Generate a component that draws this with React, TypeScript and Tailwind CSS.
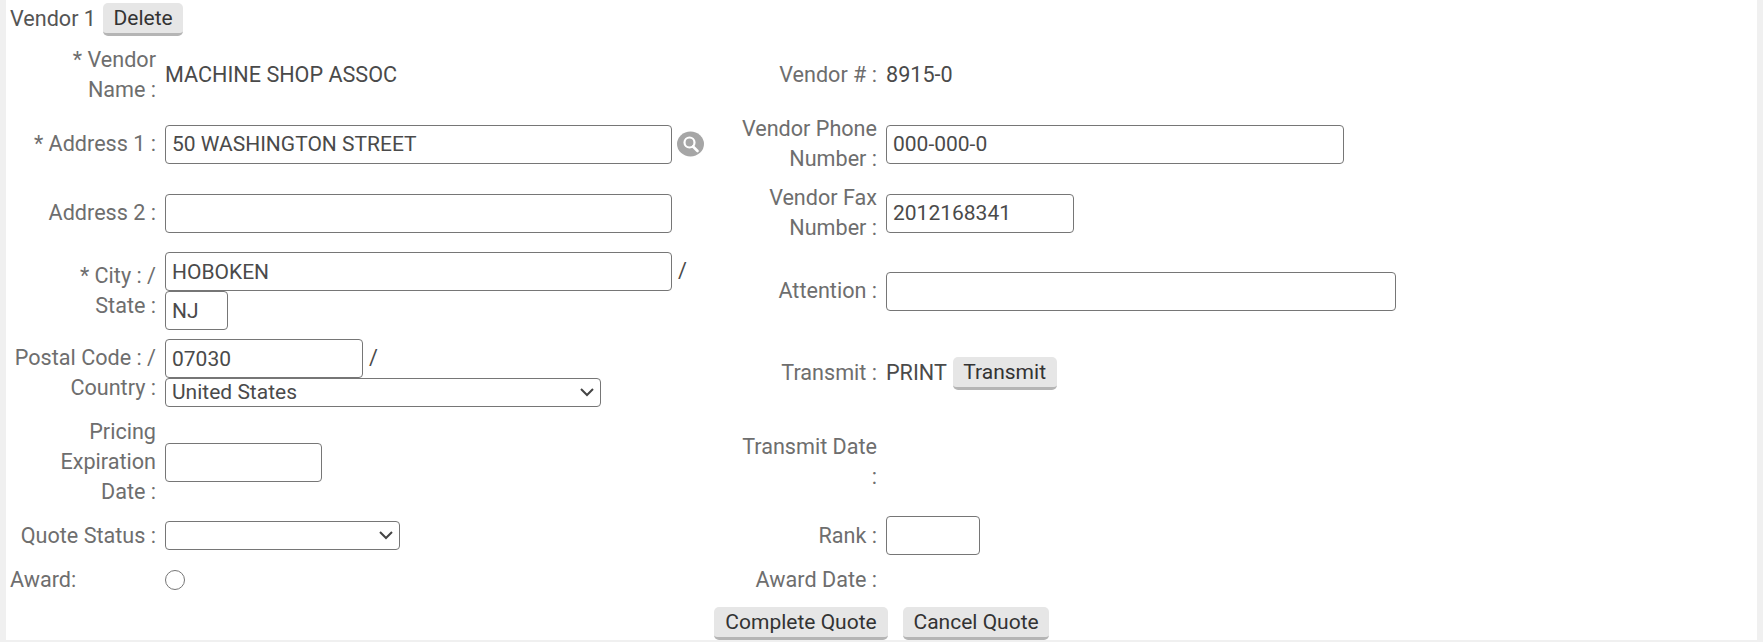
import type { ReactNode } from 'react';

const inputCls =
  "h-[39px] rounded-[4px] border border-[#767676] bg-white px-[6px] text-[21px] text-[#4a4a4a] outline-none";
const selectCls =
  "block h-[29px] w-full appearance-none rounded-[4px] border border-[#767676] bg-white pb-[2px] pl-[6px] text-[21px] leading-[24px] text-[#4a4a4a]";
const btnCls =
  "h-[33px] whitespace-nowrap rounded-[5px] border-b-[3px] border-[#b5b5b5] bg-[#e6e6e6] px-[10.5px] text-[21px] leading-[28px] text-[#333333]";

function Label({ children, width }: { children: ReactNode; width: string }) {
  return (
    <div className={`${width} shrink-0 pr-[9px] text-right leading-[30px] text-[#6e6e6e]`}>
      {children}
    </div>
  );
}

// two label/value pairs per row, fixed columns like the old table layout
function Row({ left, leftValue, right, rightValue, className = "" }: {
  left: ReactNode;
  leftValue?: ReactNode;
  right: ReactNode;
  rightValue?: ReactNode;
  className?: string;
}) {
  return (
    <div className={`flex items-center ${className}`}>
      <Label width="w-[159px] pl-[4px]">{left}</Label>
      <div className="w-[573px] shrink-0">{leftValue}</div>
      <Label width="w-[148px]">{right}</Label>
      <div className="flex-1">{rightValue}</div>
    </div>
  );
}

function SearchIcon() {
  return (
    <svg width="27" height="26" viewBox="0 0 27 26" className="shrink-0">
      <ellipse cx="13.5" cy="13" rx="13.5" ry="12.5" fill="#a6a6a6" />
      <circle cx="12.5" cy="11.5" r="5" fill="none" stroke="#ffffff" strokeWidth="2.2" />
      <path d="M16 15.5 L20.5 20" stroke="#ffffff" strokeWidth="2.6" strokeLinecap="round" />
    </svg>
  );
}

function Select({ width, children }: { width: string; children?: ReactNode }) {
  return (
    <div className={`relative ${width}`}>
      <select className={selectCls}>{children}</select>
      <svg
        width="16"
        height="10"
        viewBox="0 0 16 10"
        className="pointer-events-none absolute right-[6px] top-[9px]"
      >
        <path d="M2 2 L8 8 L14 2" fill="none" stroke="#444444" strokeWidth="2" />
      </svg>
    </div>
  );
}

export default function App() {
  return (
    <div className="h-[643px] w-[1763px] overflow-hidden bg-white font-['Roboto',sans-serif] text-[21.6px] text-[#4a4a4a]">
      <div className="h-[642px] w-full border-b-2 border-x-[6px] border-[#f0f0f0]">
        <div className="flex items-center gap-[7px] pl-[4px] pt-[3px]">
          <span className="text-[#555555]">Vendor 1</span>
          <button className={btnCls}>Delete</button>
        </div>

        <div className="mt-[9px] flex flex-col">
          <Row
            left="* Vendor Name :"
            leftValue={<span>MACHINE SHOP ASSOC</span>}
            right="Vendor # :"
            rightValue={<span>8915-0</span>}
          />
          <Row
            className="mt-[9px]"
            left="* Address 1 :"
            leftValue={
              <div className="flex items-center gap-[5px]">
                <input className={`${inputCls} w-[507px]`} defaultValue="50 WASHINGTON STREET" />
                <SearchIcon />
              </div>
            }
            right="Vendor Phone Number :"
            rightValue={<input className={`${inputCls} w-[458px]`} defaultValue="000-000-0" />}
          />
          <Row
            className="mt-[9px]"
            left="Address 2 :"
            leftValue={<input className={`${inputCls} block w-[507px]`} />}
            right="Vendor Fax Number :"
            rightValue={<input className={`${inputCls} block w-[188px]`} defaultValue="2012168341" />}
          />
          <Row
            className="mt-[9px]"
            left={<>* City : /<br />State :</>}
            leftValue={
              <div>
                <div className="flex items-center gap-[6px]">
                  <input className={`${inputCls} w-[507px]`} defaultValue="HOBOKEN" />
                  <span>/</span>
                </div>
                <input className={`${inputCls} block w-[63px]`} defaultValue="NJ" />
              </div>
            }
            right="Attention :"
            rightValue={<input className={`${inputCls} block w-[510px]`} />}
          />
          <Row
            className="mt-[9px]"
            left="Postal Code : / Country :"
            leftValue={
              <div>
                <div className="flex items-center gap-[6px]">
                  <input className={`${inputCls} w-[198px]`} defaultValue="07030" />
                  <span>/</span>
                </div>
                <Select width="w-[436px]">
                  <option>United States</option>
                </Select>
              </div>
            }
            right="Transmit :"
            rightValue={
              <div className="flex items-center gap-[6px]">
                <span>PRINT</span>
                <button className={btnCls}>Transmit</button>
              </div>
            }
          />
          <Row
            className="mt-[10px]"
            left={<>Pricing<br />Expiration<br />Date :</>}
            leftValue={<input className={`${inputCls} block w-[157px]`} />}
            right="Transmit Date :"
          />
          <Row
            className="mt-[9px]"
            left="Quote Status :"
            leftValue={
              <Select width="w-[235px]">
                <option></option>
              </Select>
            }
            right="Rank :"
            rightValue={<input className={`${inputCls} block w-[94px]`} />}
          />
          <Row
            className="mt-[10px]"
            left={<span className="block text-left">Award:</span>}
            leftValue={
              <input
                type="radio"
                className="m-0 block h-[20px] w-[20px] appearance-none rounded-full border-[1.5px] border-[#767676] bg-white"
              />
            }
            right="Award Date :"
          />
        </div>

        <div className="mt-[12px] flex gap-[15px] pl-[708px]">
          <button className={`${btnCls} w-[174px]`}>Complete Quote</button>
          <button className={`${btnCls} w-[146px]`}>Cancel Quote</button>
        </div>
      </div>
    </div>
  );
}
